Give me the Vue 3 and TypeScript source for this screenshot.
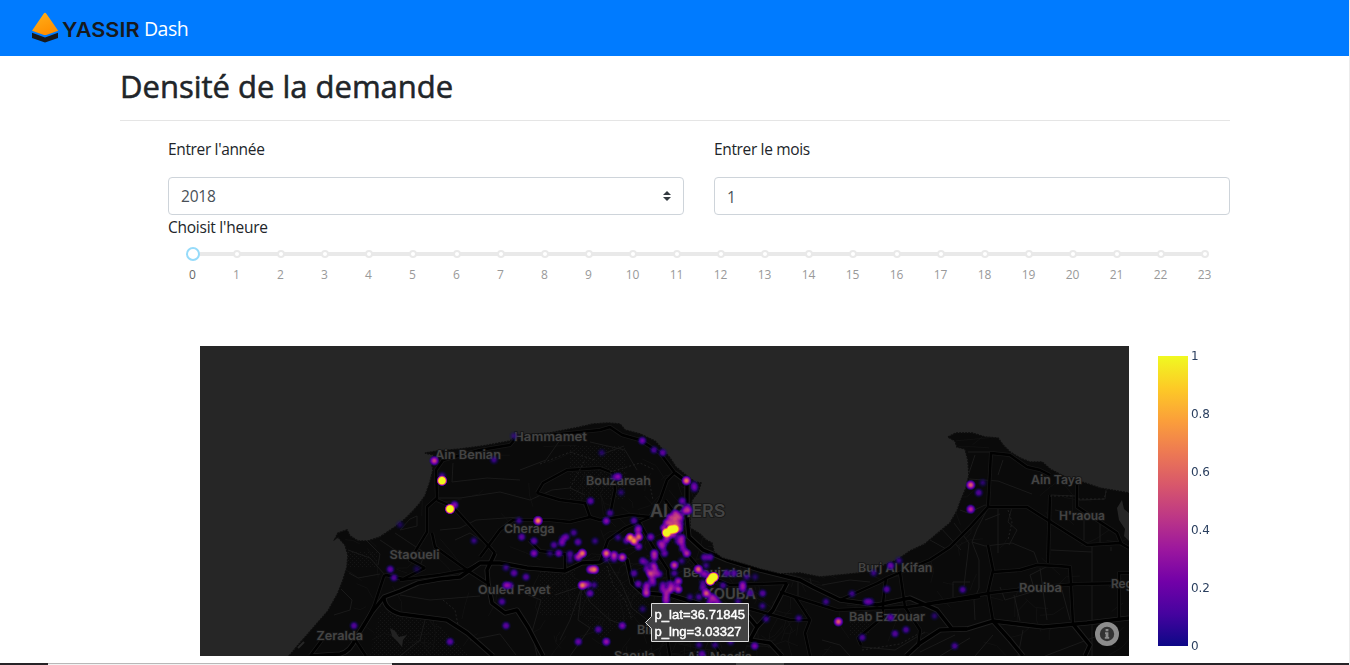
<script setup lang="ts">
import { ref } from 'vue'

type Point = [number, number, number]
interface Place { name: string; x: number; y: number; w: number; size?: number }

const year = ref('2018')
const month = ref('1')
const hour = ref(0)
const hours = Array.from({ length: 24 }, (_, i) => i)
const ticks = ['1', '0.8', '0.6', '0.4', '0.2', '0']

const land =
  'M289 656L300 643L308 634L320 620L328 611L338 593L343 580L347 567L348 555L345 545L338 537L335 539L338 533L347 530L350 536L358 541L368 541L380 537L395 527L405 519L413 511L420 503L425 496L430 482L433 470L431 460L434 455L425 453L438 451L460 449L483 446L510 441L517 435L550 433L580 427L593 424L608 423L620 424L625 430L640 434L655 441L662 449L670 458L676 467L687 476L695 482L701 483L698 492L692 500L690 510L690 528L700 534L706 540L712 543L714 552L722 558L740 563L760 569L780 574L800 573L820 577L840 575L860 573L880 567L897 560L910 551L925 544L938 533L950 523L957 511L961 500L966 488L969 475L968 460L965 449L957 447L955 441L948 437L956 433L972 433L985 437L998 438L1003 445L1010 452L1020 458L1030 462L1042 462L1050 469L1065 477L1085 483L1100 488L1129 493V656Z'

const highways = [
  'M310 656L340 654Q350 652 356 638L372 612L384 597L400 591L418 583L440 579L460 577L480 563L500 563L527 568L565 571L582 563L600 562L612 555L627 560L632 583L643 593L670 595L700 604L740 606L757 627',
  'M384 597Q384 609 400 614L447 620L467 633L493 656',
  'M495 553L487 570L488 583L492 603L505 613L517 610L528 627L543 656',
  'M675 473L687 482L687 517L689 537L703 550L727 560L760 570L800 580L813 587L840 600L877 605L910 598L937 610L952 629L967 629L993 621L1043 627L1087 623L1129 618',
  'M993 621L1010 640L1023 656',
  'M967 629L940 630L920 643L906 656',
  'M787 583L773 610L757 627L750 640L770 643L782 656',
  'M1073 624L1090 645L1085 656',
]

const roads = [
  'M400 580L440 575L467 570L480 563',
  'M366 622L374 606L384 576L386 575L403 579L425 568',
  'M425 568L410 560L427 532L427 507L437 498L436 470L443 460L480 450L510 445L517 437L550 435L600 430L610 427L622 435L640 440L660 453L675 473',
  'M437 500L453 507L495 553',
  'M432 533L435 547L467 570L487 583',
  'M480 557L500 530L513 520L550 520L570 522L590 517L600 520L630 515L650 517L660 500L667 480L675 472',
  'M537 493L543 483L567 470L600 468L613 473L615 490L610 515',
  'M537 493L560 500L585 503L590 517',
  'M529 540L540 551L565 554L565 571',
  'M920 605L990 593L1040 587L1077 584L1129 583',
  'M988 545L993 570L988 592L993 621',
  'M887 578L930 560L950 547L970 527L988 507L1027 507L1087 545L1120 543L1129 548',
  'M988 507L991 453L1010 455L1027 467L1040 470L1050 475',
  'M1050 495L1048 563M993 572L1020 570L1037 565L1057 566L1070 567L1073 624',
  'M1077 485L1077 507L1117 533L1121 543',
  'M1129 573L1119 573L1119 618',
  'M780 592L795 597L810 620L805 633L810 656',
  'M795 597L837 610L907 607L980 597',
  'M840 600L860 591L878 583L887 578',
  'M900 573L905 607L920 630L918 647',
  'M883 603L886 578M861 645L858 638L883 617L883 603',
  'M700 604L705 630L722 656M740 606L790 620L810 620',
  'M665 500L680 520L684 550L705 575L730 585L787 583',
  'M638 520L652 545L668 570L670 595L664 620L670 656',
  'M354 638L366 656M310 656L322 640',
  'M600 562L608 540L625 528L650 517',
]

const streets = [
  'M348 550L370 558L385 575M349 573L358 578L380 574M341 589L352 600L350 610L334 615',
  'M380 540L410 560M395 533L425 553L420 566M366 540L380 554L378 565M410 519L417 516L417 526L400 530Z',
  'M437 498L460 498L500 492L530 500L552 490M453 463L452 482L487 478L520 480',
  'M440 530L460 528L476 520L520 517M455 540L470 533L493 548M400 595L430 600L480 596',
  'M425 620L420 640L400 656M528 595L541 600L532 632L537 656M555 595L582 586L570 620L560 640M470 640L500 634L516 655',
  'M582 586L590 602L610 620L627 626M582 586L578 620L590 628L570 656M607 560L622 585L632 608L650 622',
  'M520 470L546 460L560 440M552 490L570 488L585 495M590 442L625 450L637 470M600 455L624 446',
  'M960 500L975 455M969 479L998 481L1032 494M998 475L1003 460M968 452H990',
  'M960 510L968 513L985 505L995 508M988 508L977 529L972 542L979 560L979 588L974 600L975 620',
  'M972 542L985 546L1012 543L1034 552L1038 563M998 507V553M985 520L1000 514M1012 507L1008 522L1017 530L1009 545',
  'M940 527L961 550M954 523L969 543L964 586M953 597V582H970M930 540L948 550',
  'M1051 495L1075 496L1078 500L1105 499L1106 490M1055 510L1084 516V540M1100 515V545M1051 550L1092 552M1111 551V547',
  'M1000 587L1005 600L1035 591L1030 575L1050 565M1092 545V656M1040 568L1047 620M1014 595L1020 621M1062 590L1070 620',
  'M975 656L993 635M920 652L955 635M940 656L970 638M1045 656L1100 635M1023 630L1018 656',
  'M798 577V600M810 578L812 587M822 640L840 645L850 656M822 585L850 580L870 582M862 647L895 650L925 632',
]

// Small deterministic generator for the faint residential street grid.
let seed = 77
const rand = () => {
  seed = (seed * 16807) % 2147483647
  return seed / 2147483647
}
const lanes = Array.from({ length: 330 }, (_, i) => {
  const dense = i < 170
  const x = dense ? 600 + rand() * 210 : 330 + rand() * 800
  const y = dense ? 470 + rand() * 190 : 440 + rand() * 220
  const a = rand() * 6.3
  const l = 5 + rand() * 14
  const bend = a + (rand() - 0.5) * 1.6
  const mx = x + Math.cos(a) * l
  const my = y + Math.sin(a) * l
  return `M${x.toFixed(1)} ${y.toFixed(1)}L${mx.toFixed(1)} ${my.toFixed(1)}L${(mx + Math.cos(bend) * l).toFixed(1)} ${(my + Math.sin(bend) * l).toFixed(1)}`
}).join('')

const places: Place[] = [
  { name: 'Hammamet', x: 514, y: 440.5, w: 73 },
  { name: 'Ain Benian', x: 435, y: 458.5, w: 66 },
  { name: 'Bouzareah', x: 586, y: 485, w: 65 },
  { name: 'ALGIERS', x: 650, y: 517, w: 75.5, size: 17 },
  { name: 'Cheraga', x: 504, y: 532.5, w: 50.5 },
  { name: 'Staoueli', x: 389.5, y: 558.5, w: 50 },
  { name: 'Ouled Fayet', x: 478, y: 594, w: 72.5 },
  { name: 'Zeralda', x: 316.5, y: 640, w: 46.5 },
  { name: 'Belouizdad', x: 683, y: 577, w: 67.5 },
  { name: 'KOUBA', x: 704, y: 598.5, w: 52, size: 14.5 },
  { name: 'Birkhadem', x: 637, y: 634, w: 66 },
  { name: 'Saoula', x: 614, y: 660, w: 41 },
  { name: 'Ain Naadja', x: 687, y: 660.5, w: 65 },
  { name: 'Burj Al Kifan', x: 858, y: 572, w: 74.5 },
  { name: 'Bab Ezzouar', x: 849, y: 621, w: 76 },
  { name: 'Rouiba', x: 1019, y: 592, w: 43 },
  { name: 'Ain Taya', x: 1031, y: 483.5, w: 51 },
  { name: "H'raoua", x: 1059, y: 519.5, w: 46 },
  { name: 'Reghaia', x: 1111, y: 588, w: 46 },
]

const hot: [number, number][] = [
  [442, 480.7], [450, 509], [666.5, 532.8], [671, 529.5], [674.5, 529], [712.5, 577.5], [710.3, 580.7], [714, 577],
]

// x, y, relative demand
const demand: Point[] = [
  [434.3, 460.7, .5], [454.5, 505, .28], [442, 476, .15], [494, 460, .13], [474, 540.7, .12], [538, 520.7, .75], [519, 520.7, .13],
  [521.7, 537, .2], [534, 541, .2], [534, 553.3, .27], [554, 545, .17], [558.7, 553.3, .24], [550, 553.3, .1], [562, 543, .22],
  [562.5, 539, .14], [566, 537, .2], [573.7, 532.7, .15], [578, 542, .2], [570, 554, .17], [570, 560, .11], [582.3, 553.3, .68], [578.3, 557, .42],
  [590.5, 501, .2], [595, 541, .12], [590.5, 569.5, .45], [594.5, 569.5, .65], [582.3, 585.3, .68], [587, 584.5, .3], [594, 585, .13],
  [590, 593.3, .22], [506, 567.7, .12], [514, 573, .2], [526, 577, .18], [506, 585.3, .27], [510, 585.3, .18], [502, 601.7, .17],
  [506, 625.7, .2], [450, 641.7, .2], [578.3, 641.7, .22], [598.3, 629.5, .18], [514, 436, .1], [390.3, 569.3, .2], [394, 577.7, .17],
  [354, 625.7, .18], [400, 524.7, .08], [416.7, 569, .07], [642.3, 440.7, .23], [654, 450, .16], [662.7, 452.7, .2], [686.4, 480.7, .7],
  [694, 485, .17], [694.5, 488.5, .17], [682.3, 501, .22], [618.3, 476.7, .27], [614, 477, .12], [601.7, 452.7, .09], [621, 492.5, .1],
  [610, 513, .16], [606.3, 521, .28], [634, 520.7, .18], [638.3, 528.5, .28], [630.2, 537.5, .8], [634, 541, .8], [638.7, 537, .62],
  [638.5, 546.5, .28], [638, 532, .2], [650.7, 537, .25], [626.5, 540.5, .2], [618, 537.5, .12], [688.5, 510.5, .34], [684.5, 511, .3], [687, 507, .2],
  [675, 513.5, .36], [670.5, 517.5, .4], [675, 519, .48], [680, 518, .36], [678, 515, .25], [667, 522.5, .36], [671, 523.5, .45], [676, 524, .45],
  [680, 524, .25], [664, 528, .35], [679, 529, .42], [671, 534, .4], [675, 535, .2], [667, 538, .35], [660.5, 543.5, .28], [662.5, 547, .28], [665, 542, .2],
  [681.7, 538, .32], [681.7, 543, .3], [683, 548.5, .25], [678, 541, .18], [606.3, 553.3, .65], [606.3, 559, .12], [614, 555, .4], [614, 559, .18], [622.3, 557.3, .5],
  [654.3, 553.3, .36], [654.3, 557.5, .28], [664.5, 553.3, .22], [686.7, 553.3, .42], [642.7, 561, .22], [647, 563, .12], [674.3, 565.2, .48],
  [653.5, 565.5, .32], [655, 569.5, .3], [650.3, 573.5, .5], [647, 569, .22], [655, 574, .27], [659, 574, .22], [634, 573.3, .18], [674.3, 573.3, .15],
  [638.3, 584, .22], [652, 579, .28], [647, 585, .25], [646, 589, .27], [646.3, 593.3, .42], [653, 583, .2], [678.3, 581.3, .38], [670.3, 589.3, .42],
  [678.3, 589.3, .42], [663, 589.5, .25], [666.5, 593, .32], [666, 597.5, .3], [666, 601.5, .25], [663, 585, .2], [670, 584, .22], [674, 586, .2],
  [642.7, 609, .1], [622.3, 625.7, .25], [606.3, 641.7, .32], [698.3, 569.3, .62], [703, 573.5, .25], [704.5, 557.3, .2], [710, 557.3, .2],
  [706, 565.5, .12], [707, 575, .2], [726.7, 573.3, .18], [734, 573.3, .18], [706.3, 593.3, .58], [703, 588, .2], [703, 583, .14], [711.7, 597, .32], [715, 599.5, .28], [710, 602, .24],
  [718, 603, .2], [742.7, 584.5, .27], [742.7, 588.5, .25], [750, 593, .17], [762.7, 593.3, .18], [762.5, 606, .12], [766, 619, .13], [723, 585.5, .15],
  [738, 601.5, .12], [754.7, 646, .25], [699, 645, .12], [715, 645, .12], [730.7, 642, .12], [699, 597, .15], [702, 654, .2], [746.7, 577, .12],
  [755, 577, .09], [681.7, 561, .12], [690, 597, .12], [970.7, 509.2, .42], [890.7, 565.7, .22], [899, 560.7, .12], [873.7, 573, .12],
  [886.7, 589.3, .18], [852, 593.7, .13], [826, 601.7, .13], [866.5, 601.7, .17], [870.5, 601.7, .15], [962.7, 589.7, .16], [798.7, 618.3, .13],
  [838.4, 621.7, .6], [890.5, 617.5, .2], [862.3, 637.5, .16], [895, 633.7, .18], [906, 629.7, .16], [934.5, 616, .1], [954.7, 646, .15],
  [970.7, 485, .6], [978.7, 492.7, .18], [982.7, 482.7, .1],
]
</script>

<template>
  <div class="page">
    <header class="navbar">
      <svg class="logo" width="110" height="34" viewBox="0 0 110 34">
        <defs>
          <linearGradient id="amber" x1="0" y1="0" x2="0.5" y2="1">
            <stop offset="0" stop-color="#ffb11b" />
            <stop offset="1" stop-color="#ff8f00" />
          </linearGradient>
        </defs>
        <path d="M11.8 2.6Q13 1 14.2 2.6L26.2 19.8L14.2 23.9Q13.1 24.3 12 23.9L0 19.8Z" fill="url(#amber)" />
        <path d="M0 21.8L13 26.4L26 21.8V27L13 31.6L0 27Z" fill="#17191c" />
        <text x="30" y="25.6" textLength="77.5" lengthAdjust="spacingAndGlyphs">YASSIR</text>
      </svg>
      <span class="brand">Dash</span>
    </header>

    <main class="container">
      <h1>Densité de la demande</h1>
      <section class="controls">
        <div class="row">
          <div class="col">
            <label>Entrer l'année</label>
            <div class="field">
              <span>{{ year }}</span>
              <svg width="8" height="10" viewBox="0 0 8 10"><path d="M0 4L4 0L8 4ZM0 6H8L4 10Z" fill="#343a40" /></svg>
            </div>
          </div>
          <div class="col">
            <label>Entrer le mois</label>
            <div class="field low"><span>{{ month }}</span></div>
          </div>
        </div>
        <p class="caption">Choisit l'heure</p>
        <div class="slider">
          <div v-for="h in hours" :key="h" class="step" :class="{ active: h === hour }" @click="hour = h">
            <div class="track"><i></i></div>
            <span>{{ h }}</span>
          </div>
        </div>
      </section>
    </main>

    <section class="chart">
      <svg class="map" width="929" height="310" viewBox="200 346 929 310">
        <defs>
          <clipPath id="land"><path :d="land" /></clipPath>
          <pattern id="grain" width="4" height="4" patternUnits="userSpaceOnUse">
            <rect width="1" height="1" fill="#151515" /><rect x="2" y="2" width="1" height="1" fill="#151515" />
          </pattern>
          <radialGradient id="blob">
            <stop offset="0" stop-color="#000" stop-opacity="1" />
            <stop offset=".25" stop-color="#000" stop-opacity=".84" />
            <stop offset=".5" stop-color="#000" stop-opacity=".5" />
            <stop offset=".75" stop-color="#000" stop-opacity=".2" />
            <stop offset="1" stop-color="#000" stop-opacity="0" />
          </radialGradient>
          <radialGradient id="peak">
            <stop offset=".6" stop-color="#000" stop-opacity="1" />
            <stop offset=".8" stop-color="#000" stop-opacity=".4" />
            <stop offset="1" stop-color="#000" stop-opacity="0" />
          </radialGradient>
          <filter id="plasma" filterUnits="userSpaceOnUse" x="200" y="346" width="929" height="310" color-interpolation-filters="sRGB">
            <feColorMatrix values="0 0 0 1 0  0 0 0 1 0  0 0 0 1 0  0 0 0 0 1" result="density" />
            <feComponentTransfer in="density" result="ramp">
              <feFuncR type="table" tableValues=".05 .275 .447 .612 .741 .847 .929 .984 .992 .941" />
              <feFuncG type="table" tableValues=".03 .012 .004 .09 .216 .341 .475 .624 .792 .976" />
              <feFuncB type="table" tableValues=".53 .624 .659 .62 .525 .42 .325 .227 .149 .129" />
            </feComponentTransfer>
            <feComponentTransfer in="SourceGraphic" result="mask">
              <feFuncA type="table" tableValues="0 .78 1 1 1 1 1 1 1 1" />
            </feComponentTransfer>
            <feComposite in="ramp" in2="mask" operator="in" />
          </filter>
        </defs>
        <rect x="200" y="346" width="929" height="310" fill="#262626" />
        <path :d="land" class="land" />
        <g clip-path="url(#land)">
          <path d="M348 552H378V568H348ZM380 610L440 625L470 656H370ZM540 570H575V615H540ZM570 445H625V500H570ZM606 565L650 605L600 640L570 600ZM850 622H870V635H850Z" fill="url(#grain)" />
          <path :d="lanes" class="lane" />
          <path v-for="(d, i) in streets" :key="'s' + i" :d="d" class="street" />
          <path v-for="(d, i) in roads" :key="'rc' + i" :d="d" class="road-case" />
          <path v-for="(d, i) in highways" :key="'hc' + i" :d="d" class="way-case" />
          <path v-for="(d, i) in roads" :key="'r' + i" :d="d" class="road" />
          <path v-for="(d, i) in highways" :key="'h' + i" :d="d" class="way" />
        </g>
        <path d="M390 628L395 631L399 637L407 635L403 640L402 647L397 641L392 636Z" fill="#222" />
        <path d="M298 648L304 642" stroke="#262626" stroke-width="2" />
        <path d="M1122 500L1117 508L1119 520L1125 529L1124 536L1129 541V513L1124 509Z" fill="#262626" />
        <path d="M540 464L570 452L595 460M570 488L585 460M610 472L640 463L655 470M650 485L653 500M862 650L900 644L918 634M1008 510L1012 522L1008 540M1050 496H1072M1078 499H1104L1107 489M607 566L613 585L625 600L632 620M443 600L455 610L458 625" class="rail" />
        <g class="places">
          <text
            v-for="p in places" :key="p.name" :x="p.x" :y="p.y" :textLength="p.w"
            lengthAdjust="spacingAndGlyphs" :font-size="p.size ?? 12"
          >{{ p.name }}</text>
        </g>
        <g filter="url(#plasma)">
          <circle v-for="(p, i) in demand" :key="'d' + i" :cx="p[0]" :cy="p[1]" r="5.5" :opacity="p[2]" fill="url(#blob)" />
          <circle v-for="(p, i) in hot" :key="'p' + i" :cx="p[0]" :cy="p[1]" r="5.4" fill="url(#peak)" />
        </g>
        <g class="info">
          <circle cx="1107" cy="634" r="12" fill="#8c8c8c" />
          <circle cx="1107" cy="634" r="7.2" fill="#333" />
          <path d="M1105.6 629H1108.4V631.3H1105.6ZM1105 632.3H1108.4V637H1109.2V638.8H1104.8V637H1105.6V634H1105Z" fill="#8c8c8c" />
        </g>
        <g class="hover">
          <path d="M645.5 622.5L651.5 616.5V603.5H748.5V641.5H651.5V628.5Z" />
          <text x="654.5" y="619" textLength="90.5">p_lat=36.71845</text>
          <text x="654.5" y="636" textLength="87">p_lng=3.03327</text>
        </g>
      </svg>
      <div class="bar"></div>
      <div class="ticks"><span v-for="t in ticks" :key="t">{{ t }}</span></div>
    </section>

    <footer class="taskbar"><i class="search"></i><i class="task"></i></footer>
  </div>
</template>

<style>
body { margin: 0; background: #fff; overflow: hidden; }
</style>

<style scoped>
.page {
  box-sizing: border-box;
  width: 1350px;
  height: 665px;
  display: flex;
  flex-direction: column;
  overflow: hidden;
  border-right: 1px solid #ececec;
  color: #212529;
  font-family: "Open Sans", "Noto Sans", sans-serif;
}
.navbar {
  height: 56px;
  flex: none;
  display: flex;
  align-items: center;
  padding-left: 32px;
  background: #007bff;
}
.logo text { font: 600 20px Inter, "Open Sans", sans-serif; fill: #17191c; }
.brand { color: #fff; font-size: 19.5px; letter-spacing: -0.55px; margin: 2px 0 0 2px; line-height: 30px; }
.container { width: 1110px; margin-left: 120px; flex: none; height: 290px; }
h1 {
  margin: 0;
  box-sizing: border-box;
  height: 65px;
  padding-top: 10px;
  font-size: 31px;
  font-weight: 500;
  line-height: 40px;
  -webkit-text-stroke: 0.55px #212529;
  border-bottom: 1px solid #e5e5e5;
}
.controls { padding: 16px 0 0 48px; }
.row { display: grid; grid-template-columns: 516px 516px; gap: 30px; }
label { display: block; font-size: 15.5px; letter-spacing: -0.35px; line-height: 24px; height: 40px; }
.field {
  box-sizing: border-box;
  height: 38px;
  border: 1px solid #ced4da;
  border-radius: 4px;
  display: flex;
  align-items: center;
  justify-content: space-between;
  padding: 0 12px;
  color: #495057;
  font-size: 15.5px;
  letter-spacing: -0.2px;
}
.low { padding-top: 2px; }
.caption { margin: 0 0 6px; height: 24px; line-height: 24px; font-size: 15.5px; letter-spacing: -0.25px; }
.slider { display: flex; width: 1056px; margin-left: 3px; }
.step { width: 44px; display: flex; flex-direction: column; align-items: center; color: #999; }
.track {
  width: 44px;
  height: 18px;
  display: flex;
  align-items: center;
  justify-content: center;
  background: linear-gradient(#e9e9e9, #e9e9e9) 0 7px / 100% 4px no-repeat;
}
.track i { box-sizing: border-box; width: 8px; height: 8px; border: 2px solid #e9e9e9; border-radius: 50%; background: #fff; }
.step:first-child .track { background-position: 22px 7px; }
.step:last-child .track { background-size: 22px 4px; }
.active .track i { width: 14px; height: 14px; border-color: #96dbfa; }
.step span { font-size: 12px; line-height: 18px; margin: 3px 1px 0 0; letter-spacing: -0.1px; }
.step.active { color: #666; }
.chart { display: flex; flex: none; height: 317px; margin-left: 200px; }
.map { display: block; }
.land { fill: #0a0a0a; stroke: #0d0d0d; stroke-width: 1.5; stroke-dasharray: 2 1; }
.lane, .street, .road, .road-case, .way, .way-case, .rail { fill: none; stroke-linejoin: round; }
.lane { stroke: #131313; stroke-width: 0.8; }
.street { stroke: #1a1a1a; stroke-width: 1; }
.road-case { stroke: #171717; stroke-width: 4; }
.road { stroke: #010101; stroke-width: 2.4; }
.way-case { stroke: #1f1f1f; stroke-width: 5.2; }
.way { stroke: #000; stroke-width: 3.4; }
.rail { stroke: #202020; stroke-width: 1; stroke-dasharray: 2 2; }
.places text {
  font-family: Inter, "Open Sans", sans-serif;
  font-weight: 600;
  fill: #444;
  stroke: #151515;
  stroke-width: 1.5px;
  paint-order: stroke;
}
.hover path { fill: #444; stroke: #ddd; stroke-width: 1; }
.hover text {
  font: 13px "Liberation Sans", Arial, sans-serif;
  fill: #fff;
  stroke: #fff;
  stroke-width: 0.45px;
}
.bar {
  width: 30px;
  height: 290px;
  margin: 10px 3px 0 29px;
  background: linear-gradient(to top, #0d0887, #46039f, #7201a8, #9c179e, #bd3786, #d8576b, #ed7953, #fb9f3a, #fdca26, #f0f921);
}
.ticks { display: flex; flex-direction: column; justify-content: space-between; height: 306px; margin-top: 2px; }
.ticks span { font: 12px/16px "DejaVu Sans", Verdana, sans-serif; color: #2a3f5f; letter-spacing: -0.1px; }
.taskbar { height: 2px; flex: none; display: flex; background: #262427; width: 1350px; }
.search { box-sizing: border-box; width: 344px; margin-left: 48px; background: #f2f2f2; border-top: 1px solid #b8b8b8; }
.task { width: 48px; margin-left: 344px; background: #4a4a4a; }
</style>
